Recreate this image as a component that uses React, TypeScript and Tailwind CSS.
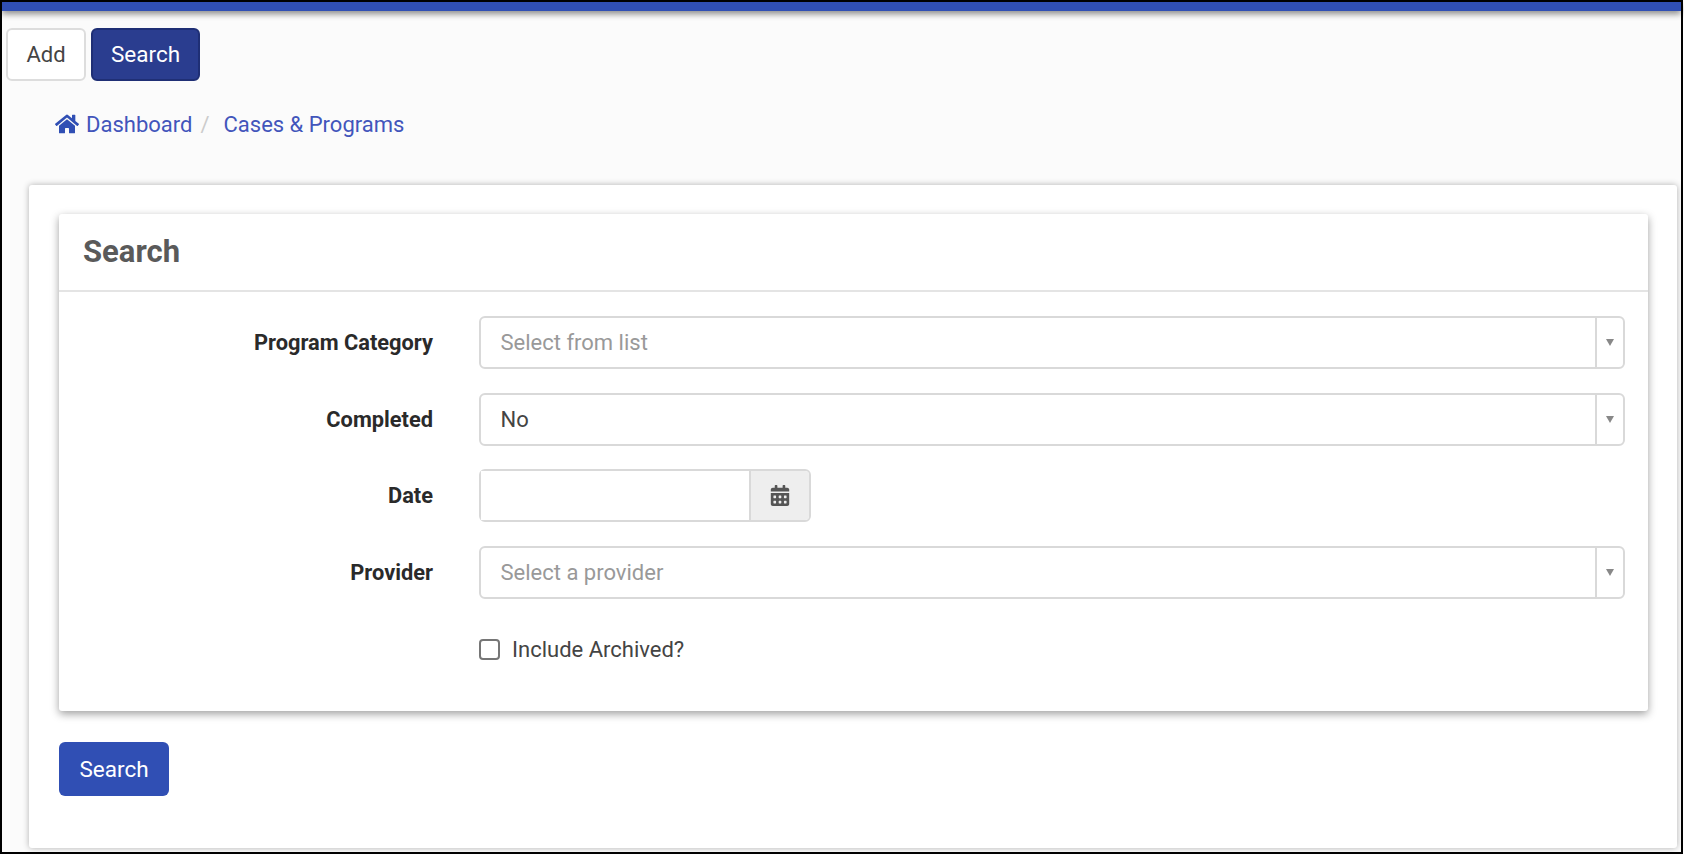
import { FaHome, FaCalendarAlt } from 'react-icons/fa'

function SelectBox({ text, placeholder }: { text: string; placeholder?: boolean }) {
  return (
    <div className="flex h-[53px] flex-1 rounded-[6px] border-2 border-[#d9d9d9] bg-white">
      <div className={`flex flex-1 items-center pl-[19.5px] ${placeholder ? 'text-[#999999]' : 'text-[#444444]'}`}>
        {text}
      </div>
      <div className="flex w-[28px] items-center justify-center border-l-2 border-[#d9d9d9] pr-[1px]">
        <div className="h-0 w-0 border-x-[4.5px] border-t-[7px] border-x-transparent border-t-[#888888]" />
      </div>
    </div>
  )
}

function Row({ label, children }: { label: string; children: React.ReactNode }) {
  return (
    <div className="flex items-center">
      <div className="w-[420px] pr-[46px] pt-[2px] text-right text-[21.8px] font-bold text-[#2a2a2a]">{label}</div>
      {children}
    </div>
  )
}

export default function App() {
  return (
    <div className="h-[855px] w-[1684px] overflow-hidden bg-white font-['Roboto',sans-serif] text-[22px]">
      <div className="flex h-[854px] w-[1683px] flex-col border-2 border-black bg-[#fbfbfb]">
        <div className="h-[9px] shrink-0 bg-[#304fb4] shadow-[0_3px_6px_rgba(0,0,0,0.45)]" />

        <div className="mt-[17px] flex gap-[5px] pl-[4px]">
          <button className="flex h-[53px] w-[80px] items-center justify-center rounded-[6px] border-2 border-[#dddddd] bg-white text-[#444444]">
            Add
          </button>
          <button className="flex h-[53px] w-[109px] items-center justify-center rounded-[6px] border-2 border-[#1f2f75] bg-[#2a3d8f] text-[22.5px] text-white">
            Search
          </button>
        </div>

        <div className="mt-[25px] mb-[1px] flex h-[36px] items-center pl-[53px] text-[#4255bb]">
          <FaHome className="mr-[7px] h-[24px] w-[24px] text-[#304fb4]" />
          <span>Dashboard</span>
          <span className="ml-[8px] mr-[14px] text-[#cccccc]">/</span>
          <span>Cases &amp; Programs</span>
        </div>

        <div className="mt-[42px] mb-[4px] ml-[27px] mr-[4px] flex flex-1 flex-col rounded-[3px] bg-white pl-[30px] pr-[29px] pt-[29px] shadow-[0_0_6px_rgba(0,0,0,0.3)]">
          <div className="h-[497px] rounded-[3px] bg-white shadow-[0_3px_8px_rgba(0,0,0,0.38)]">
            <div className="flex h-[78px] items-center border-b-2 border-[#e4e4e4] pl-[24px] text-[31px] font-bold text-[#5a5a5a]">
              Search
            </div>
            <div className="flex flex-col gap-[23.6px] pt-[24px] pr-[23px]">
              <Row label="Program Category">
                <SelectBox text="Select from list" placeholder />
              </Row>
              <Row label="Completed">
                <SelectBox text="No" />
              </Row>
              <Row label="Date">
                <div className="flex h-[53px] w-[332px] rounded-[6px] border-2 border-[#d9d9d9]">
                  <div className="flex-1 bg-white" />
                  <div className="flex w-[60px] items-center justify-center rounded-r-[4px] border-l-2 border-[#d9d9d9] bg-[#eeeeee]">
                    <FaCalendarAlt className="h-[21px] w-[20px] text-[#555555]" />
                  </div>
                </div>
              </Row>
              <Row label="Provider">
                <SelectBox text="Select a provider" placeholder />
              </Row>
              <div className="flex items-center pl-[420px] pt-[11px]">
                <div className="h-[21px] w-[21px] rounded-[4px] border-2 border-[#767676] bg-white" />
                <span className="ml-[12px] text-[#444444]">Include Archived?</span>
              </div>
            </div>
          </div>

          <button className="mt-[31px] flex h-[54px] w-[110px] items-center justify-center rounded-[6px] bg-[#304fb4] pt-[1px] text-[22.5px] text-white">
            Search
          </button>
        </div>
      </div>
    </div>
  )
}
